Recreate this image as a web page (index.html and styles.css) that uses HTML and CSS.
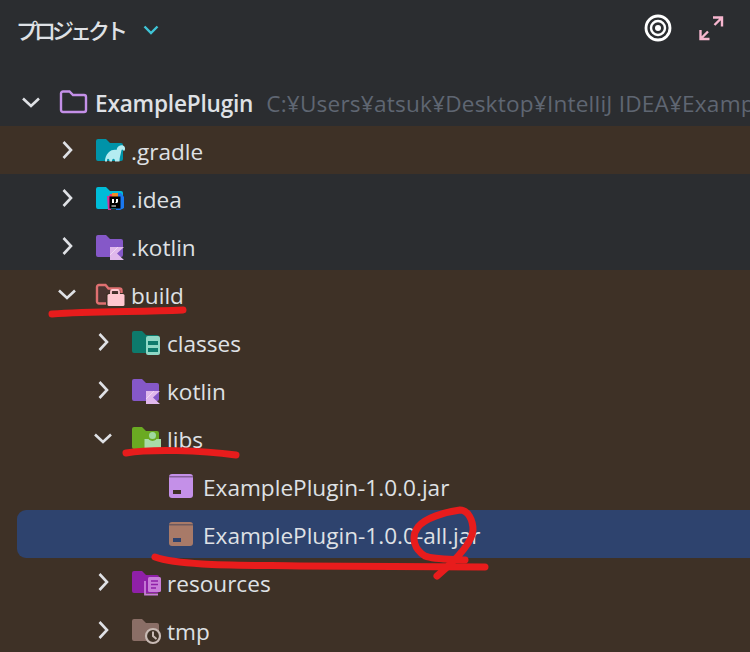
FILE: index.html
```html
<!DOCTYPE html>
<html lang="ja">
<head>
<meta charset="utf-8">
<title>プロジェクト</title>
<link rel="stylesheet" href="styles.css">
</head>
<body>
<div class="page">
  <header class="toolbar">
    <span class="title">プロジェクト</span>
    <svg class="title-chevron" width="16" height="10" viewBox="0 0 16 10"><path d="M1.500 1.500 8 8l6.500-6.500" fill="none" stroke="#3fc4d6" stroke-width="2.400"/></svg>
    <div class="tools">
      <svg width="28" height="28" viewBox="0 0 28 28"><circle cx="14" cy="14" r="12" fill="none" stroke="#fff" stroke-width="2.800"/><circle cx="14" cy="14" r="7" fill="none" stroke="#fff" stroke-width="2.400"/><circle cx="14" cy="14" r="3" fill="#fff"/></svg>
      <svg width="26" height="26" viewBox="0 0 26 26"><path d="M15 2.500h9v9M23.500 3 16.500 10M2.500 15v9h9M3 23.500l7-7" fill="none" stroke="#f7b6cf" stroke-width="2.400"/></svg>
    </div>
  </header>

  <ul class="tree">
    <li class="row d0">
      <svg class="chev" width="24" height="24" viewBox="0 0 24 24"><path d="M4 8.500l8 7.500 8-7.500" class="chev-line"/></svg>
      <svg class="icon" width="29" height="28" viewBox="0 0 29 28"><path d="M3 3.500h6.500l3.500 3.500h11a2 2 0 0 1 2 2v13a2 2 0 0 1-2 2H3a2 2 0 0 1-2-2V5.500a2 2 0 0 1 2-2z" fill="none" stroke="#c490e8" stroke-width="2.400"/></svg>
      <span class="name strong">ExamplePlugin</span>
      <span class="path">C:¥Users¥atsuk¥Desktop¥IntelliJ IDEA¥ExamplePlugin</span>
    </li>

    <li class="row d1 warm">
      <svg class="chev" width="24" height="24" viewBox="0 0 24 24"><path d="M8.500 4l7.500 8-7.500 8" class="chev-line"/></svg>
      <svg class="icon" width="29" height="28" viewBox="0 0 29 28"><path d="M2 3h8l4 4h11a2 2 0 0 1 2 2v14a2 2 0 0 1-2 2H2a2 2 0 0 1-2-2V5a2 2 0 0 1 2-2z" fill="#0093a8"/><path d="M9 25.500c0-3.500 1-6.500 3.500-9 2.500-2.500 5.500-3 8-2.500 .3-1.500 1-3 2.500-4 2-1.200 4.800-.8 5.800 1.200 .6 1.500.2 3.200-1 4-.4-1-.7-1.800-1.600-1.800-.7 0-.9 1.500-1.200 3.100-.5 2.500-1.500 5-1.500 9h-4.500c0-1.800-.5-2.800-1.500-2.800s-1.500 1-1.500 2.800h-2.500c0-1.800-.5-2.800-1.500-2.800s-1 1-1 2.800z" fill="#b4ecf1"/></svg>
      <span class="name">.gradle</span>
    </li>

    <li class="row d1">
      <svg class="chev" width="24" height="24" viewBox="0 0 24 24"><path d="M8.500 4l7.500 8-7.500 8" class="chev-line"/></svg>
      <svg class="icon" width="29" height="28" viewBox="0 0 29 28"><path d="M2 3h8l4 4h11a2 2 0 0 1 2 2v14a2 2 0 0 1-2 2H2a2 2 0 0 1-2-2V5a2 2 0 0 1 2-2z" fill="#00bcd8"/><path d="M14 10h5v6h-8z" fill="#f0386f"/><path d="M11 12h4v14h-3z" fill="#d6329a"/><path d="M20 9h5l3 4v11l-4 2h-4z" fill="#1a78f0"/><path d="M16 9h6v4h-6z" fill="#f08a24"/><rect x="13.500" y="12.500" width="11" height="12" fill="#000"/><path d="M16 15h2v4h-2zM20 15h2v3.500h-1v.5h-1.500v-1h.5zM15.500 21.500h4.500v1h-4.500z" fill="#fff"/></svg>
      <span class="name">.idea</span>
    </li>

    <li class="row d1">
      <svg class="chev" width="24" height="24" viewBox="0 0 24 24"><path d="M8.500 4l7.500 8-7.500 8" class="chev-line"/></svg>
      <svg class="icon" width="29" height="28" viewBox="0 0 29 28"><path d="M2 3h8l4 4h11a2 2 0 0 1 2 2v14a2 2 0 0 1-2 2H2a2 2 0 0 1-2-2V5a2 2 0 0 1 2-2z" fill="#8558c8"/><path d="M14 15h14l-7 6.500 7 6.500H14z" fill="#e0b8ec"/><path d="M14 23l8-8" stroke="#f0d8f4" stroke-width="1"/></svg>
      <span class="name">.kotlin</span>
    </li>

    <li class="row d1 warm">
      <svg class="chev" width="24" height="24" viewBox="0 0 24 24"><path d="M4 8.500l8 7.500 8-7.500" class="chev-line"/></svg>
      <svg class="icon" width="29" height="28" viewBox="0 0 29 28"><path d="M3 5h6.500l3 3.500h11a2 2 0 0 1 2 2v11a2 2 0 0 1-2 2H3a2 2 0 0 1-2-2V7a2 2 0 0 1 2-2z" fill="#4a3430" stroke="#e07070" stroke-width="2.400"/><rect x="10" y="13" width="19" height="15" rx="2" fill="#3e3126"/><path d="M15 14v-2.500a1.500 1.500 0 0 1 1.500-1.500h5a1.500 1.500 0 0 1 1.500 1.500V14" fill="none" stroke="#ffc8d0" stroke-width="1.800"/><rect x="11.500" y="14" width="17" height="12" rx="1.500" fill="#ffc8d0"/></svg>
      <span class="name">build</span>
    </li>

    <li class="row d2 warm">
      <svg class="chev" width="24" height="24" viewBox="0 0 24 24"><path d="M8.500 4l7.500 8-7.500 8" class="chev-line"/></svg>
      <svg class="icon" width="29" height="28" viewBox="0 0 29 28"><path d="M2 3h8l4 4h11a2 2 0 0 1 2 2v14a2 2 0 0 1-2 2H2a2 2 0 0 1-2-2V5a2 2 0 0 1 2-2z" fill="#0d7a6c"/><rect x="14" y="8" width="14" height="19" rx="2" fill="#8fd8c6"/><path d="M16 13h10v4H16zM16 20h10v4H16z" fill="#0d7a6c"/></svg>
      <span class="name">classes</span>
    </li>

    <li class="row d2 warm">
      <svg class="chev" width="24" height="24" viewBox="0 0 24 24"><path d="M8.500 4l7.500 8-7.500 8" class="chev-line"/></svg>
      <svg class="icon" width="29" height="28" viewBox="0 0 29 28"><path d="M2 3h8l4 4h11a2 2 0 0 1 2 2v14a2 2 0 0 1-2 2H2a2 2 0 0 1-2-2V5a2 2 0 0 1 2-2z" fill="#8558c8"/><path d="M14 15h14l-7 6.500 7 6.500H14z" fill="#e0b8ec"/><path d="M14 23l8-8" stroke="#f0d8f4" stroke-width="1"/></svg>
      <span class="name">kotlin</span>
    </li>

    <li class="row d2 warm">
      <svg class="chev" width="24" height="24" viewBox="0 0 24 24"><path d="M4 8.500l8 7.500 8-7.500" class="chev-line"/></svg>
      <svg class="icon" width="29" height="28" viewBox="0 0 29 28"><path d="M2 3h8l4 4h11a2 2 0 0 1 2 2v14a2 2 0 0 1-2 2H2a2 2 0 0 1-2-2V5a2 2 0 0 1 2-2z" fill="#6aaa22"/><rect x="12.500" y="15" width="16.500" height="11" fill="#a8dca8"/><circle cx="20.500" cy="12" r="5" fill="#6aaa22"/><circle cx="20.500" cy="11.500" r="3.500" fill="#a0d8a0"/></svg>
      <span class="name">libs</span>
    </li>

    <li class="row d3 warm">
      <span class="chev-space"></span>
      <svg class="icon" width="29" height="28" viewBox="0 0 29 28"><rect x="1" y="2" width="24" height="24" rx="3" fill="#c490e8"/><rect x="1" y="4" width="24" height="1.500" fill="#86609c"/><rect x="5" y="18" width="8" height="4" fill="#3e3126"/></svg>
      <span class="name">ExamplePlugin-1.0.0.jar</span>
    </li>

    <li class="slot warm">
      <div class="row selected">
        <span class="chev-space"></span>
        <svg class="icon" width="29" height="28" viewBox="0 0 29 28"><rect x="1" y="2" width="24" height="24" rx="3" fill="#a87a68"/><rect x="1" y="4" width="24" height="1.500" fill="#6e5a5e"/><rect x="5" y="18" width="8" height="4" fill="#2e436e"/></svg>
        <span class="name">ExamplePlugin-1.0.0-all.jar</span>
      </div>
    </li>

    <li class="row d2 warm">
      <svg class="chev" width="24" height="24" viewBox="0 0 24 24"><path d="M8.500 4l7.500 8-7.500 8" class="chev-line"/></svg>
      <svg class="icon" width="29" height="28" viewBox="0 0 29 28"><path d="M2 3h8l4 4h11a2 2 0 0 1 2 2v14a2 2 0 0 1-2 2H2a2 2 0 0 1-2-2V5a2 2 0 0 1 2-2z" fill="#8f20a8"/><path d="M13 13v13.500h13" fill="none" stroke="#c87ed8" stroke-width="1.800"/><rect x="16" y="9" width="13" height="15" rx="1.500" fill="#c87ed8"/><path d="M19 13h7M19 16.500h7M19 20h5" stroke="#8f20a8" stroke-width="1.500"/></svg>
      <span class="name">resources</span>
    </li>

    <li class="row d2 warm">
      <svg class="chev" width="24" height="24" viewBox="0 0 24 24"><path d="M8.500 4l7.500 8-7.500 8" class="chev-line"/></svg>
      <svg class="icon" width="29" height="28" viewBox="0 0 29 28"><path d="M2 3h8l4 4h11a2 2 0 0 1 2 2v14a2 2 0 0 1-2 2H2a2 2 0 0 1-2-2V5a2 2 0 0 1 2-2z" fill="#8a6e66"/><circle cx="21" cy="20" r="7" fill="#3e3126" stroke="#c8bab4" stroke-width="2.200"/><path d="M21 15.500V20l3.500 3" fill="none" stroke="#c8bab4" stroke-width="2"/></svg>
      <span class="name">tmp</span>
    </li>
  </ul>

  <svg class="marks" width="750" height="652" viewBox="0 0 750 652">
    <path d="M52 314C90 311 140 312 183 310"/>
    <path d="M126 453C150 449 200 450 236 455"/>
    <path d="M155 557C180 566 240 565 300 566L485 567"/>
    <path d="M437 576C450 565 472 545 473 530 473 520 468 510 460 510 445 512 425 518 418 527 410 538 415 550 425 556 435 560 455 559 465 560"/>
  </svg>
</div>
</body>
</html>
```

FILE: styles.css
```css
* {
  box-sizing: border-box;
}

html,
body {
  margin: 0;
  padding: 0;
}

body {
  background: #2b2d30;
}

.page {
  position: relative;
  width: 750px;
  height: 652px;
  overflow: hidden;
  background: #2b2d30;
  color: #dfe1e5;
  font-family: "Open Sans", "Noto Sans CJK JP", sans-serif;
}

.toolbar {
  display: flex;
  align-items: center;
  height: 56px;
  margin-bottom: 22px;
  padding: 0 26px 0 16px;
}

.title {
  font-family: "Noto Sans CJK JP", sans-serif;
  font-size: 22px;
  font-weight: 500;
  letter-spacing: -4px;
  margin-top: 1px;
  color: #dfe1e5;
}

.title-chevron {
  margin-left: 19px;
  margin-top: 4px;
}

.tools {
  display: flex;
  align-items: center;
  gap: 26px;
  margin-left: auto;
}

.tree {
  list-style: none;
  margin: 0;
  padding: 0;
}

.row {
  display: flex;
  align-items: center;
  height: 48px;
  white-space: nowrap;
  overflow: hidden;
}

.d0 { padding-left: 19px; }
.d1 { padding-left: 55px; }
.d2 { padding-left: 91px; }
.d3 { padding-left: 127px; }

.warm {
  background: #3e3126;
}

.slot {
  padding-left: 17px;
}

.selected {
  padding-left: 110px;
  background: #2e436e;
  border-radius: 9px 0 0 9px;
}

.chev {
  flex: none;
}

.chev-line {
  fill: none;
  stroke: #dfe1e5;
  stroke-width: 2.600;
}

.chev-space {
  flex: none;
  width: 24px;
}

.icon {
  flex: none;
  margin-left: 17px;
  overflow: visible;
}

.name {
  margin-left: 6px;
  margin-top: 3px;
  font-size: 22.600px;
  color: #dfe1e5;
}

.strong {
  font-weight: 600;
  letter-spacing: -0.200px;
}

.path {
  margin-left: 13px;
  margin-top: 3px;
  font-size: 22.600px;
  letter-spacing: 0.200px;
  color: #5f6672;
}

.marks {
  position: absolute;
  left: 0;
  top: 0;
  pointer-events: none;
}

.marks path {
  fill: none;
  stroke: #e81c1c;
  stroke-width: 7;
  stroke-linecap: round;
  stroke-linejoin: round;
}
```
